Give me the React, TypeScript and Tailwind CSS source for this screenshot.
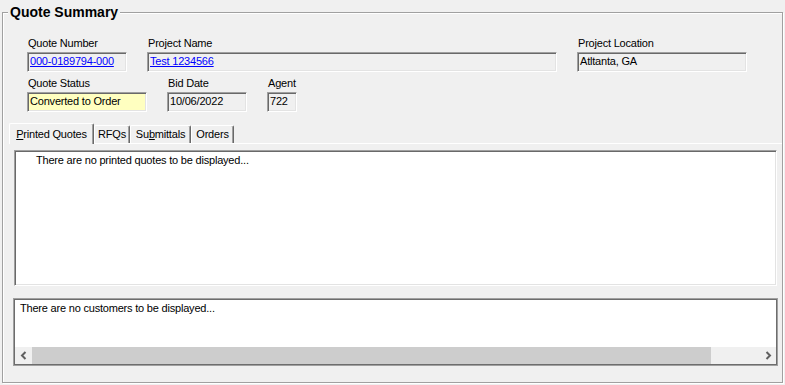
import React from "react";

const sunken =
  "border border-t-[#a0a0a0] border-l-[#a0a0a0] border-b-white border-r-white shadow-[inset_1px_1px_0_#696969,inset_-1px_-1px_0_#e3e3e3]";

function Field({
  label,
  value,
  width,
  link,
  bg = "bg-[#f0f0f0]",
}: {
  label: string;
  value: string;
  width: string;
  link?: boolean;
  bg?: string;
}) {
  return (
    <div className="flex flex-col">
      <span className="pl-[1px] h-[13px] leading-[13px] whitespace-nowrap">{label}</span>
      <div className={`mt-[2px] h-[20px] ${width} ${bg} ${sunken} pl-[2px] pt-[2px] leading-[13px] whitespace-nowrap overflow-hidden`}>
        <span className={link ? "text-[#0000ff] underline" : ""}>{value}</span>
      </div>
    </div>
  );
}

function Tab({ children, width, active }: { children: React.ReactNode; width: string; active?: boolean }) {
  return (
    <div
      className={`${width} ${
        active ? "h-[21px] -mb-px pt-[4px] relative z-10" : "h-[18px] pt-[2px]"
      } bg-[#f0f0f0] border-t border-l border-r border-t-white border-l-white border-r-[#696969] shadow-[inset_-1px_0_0_#a0a0a0] rounded-t-[2px] text-center leading-[13px] whitespace-nowrap`}
    >
      {children}
    </div>
  );
}

function Arrow({ dir }: { dir: "left" | "right" }) {
  return (
    <svg width="8" height="9" viewBox="0 0 8 9">
      <polyline
        points={dir === "left" ? "5.5,1 2,4.5 5.5,8" : "2.5,1 6,4.5 2.5,8"}
        fill="none"
        stroke="#606060"
        strokeWidth="2"
      />
    </svg>
  );
}

export default function App() {
  return (
    <div
      className="w-[785px] h-[385px] overflow-hidden bg-[#f0f0f0] text-black text-[11px] tracking-[-0.2px] pt-[12px]"
      style={{ fontFamily: '"Liberation Sans", Arial, sans-serif' }}
    >
      <div className="relative ml-[2px] w-[781px] h-[371px] border border-[#a0a0a0] shadow-[inset_1px_1px_0_#fff,1px_1px_0_#fff]">
        <span className="absolute left-[5px] top-[-9px] px-[2px] bg-[#f0f0f0] text-[14px] font-bold leading-[16px] tracking-normal">
          Quote Summary
        </span>

        <div className="pt-[24px] pl-[24px]">
          <div className="flex gap-[20px]">
            <Field label="Quote Number" value="000-0189794-000" width="w-[100px]" link />
            <Field label="Project Name" value="Test 1234566" width="w-[410px]" link />
            <Field label="Project Location" value="Atltanta, GA" width="w-[170px]" />
          </div>
          <div className="flex gap-[20px] mt-[5px]">
            <Field label="Quote Status" value="Converted to Order" width="w-[120px]" bg="bg-[#ffffc0]" />
            <Field label="Bid Date" value="10/06/2022" width="w-[80px]" />
            <Field label="Agent" value="722" width="w-[30px]" />
          </div>
        </div>

        <div className="ml-[6px] mt-[11px] w-[773px]">
          <div className="flex items-end h-[20px]">
            <Tab width="w-[85px]" active>
              <u>P</u>rinted Quotes
            </Tab>
            <Tab width="w-[36px]">RFQs</Tab>
            <Tab width="w-[61px]">
              Su<u>b</u>mittals
            </Tab>
            <Tab width="w-[43px]">Orders</Tab>
          </div>
          <div className="border-t border-white pt-[6px] pl-[5px] h-[148px]">
            <div className={`w-[763px] h-[136px] bg-white ${sunken} pl-[21px] pt-[3px] leading-[13px]`}>
              There are no printed quotes to be displayed...
            </div>
          </div>
        </div>

        <div className="ml-[10px] mt-[7px] w-[765px] h-[68px] flex flex-col bg-white border border-[#a0a0a0] shadow-[inset_0_0_0_1px_#6d6d6d]">
          <div className="flex-1 pl-[6px] pt-[3px] leading-[13px]">There are no customers to be displayed...</div>
          <div className="mx-[1px] mb-[1px] h-[17px] flex bg-[#f0f0f0]">
            <div className="w-[17px] flex items-center justify-center">
              <Arrow dir="left" />
            </div>
            <div className="w-[679px] bg-[#cdcdcd]" />
            <div className="flex-1" />
            <div className="w-[17px] flex items-center justify-center">
              <Arrow dir="right" />
            </div>
          </div>
        </div>
      </div>
    </div>
  );
}
